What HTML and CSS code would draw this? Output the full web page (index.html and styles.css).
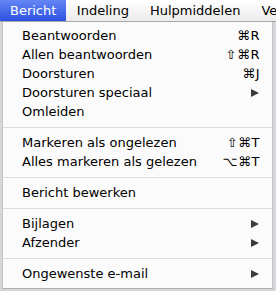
FILE: index.html
```html
<!DOCTYPE html>
<html lang="nl">
<head>
<meta charset="UTF-8">
<title>Bericht</title>
<link rel="stylesheet" href="styles.css">
</head>
<body>

<div class="menubar">
  <span class="title active">Bericht</span>
  <span class="title">Indeling</span>
  <span class="title">Hulpmiddelen</span>
  <span class="title">Venster</span>
</div>

<div class="menu">
  <div class="item"><span>Beantwoorden</span><span class="key">⌘R</span></div>
  <div class="item"><span>Allen beantwoorden</span><span class="key">⇧⌘R</span></div>
  <div class="item"><span>Doorsturen</span><span class="key">⌘J</span></div>
  <div class="item"><span>Doorsturen speciaal</span><span class="arrow"></span></div>
  <div class="item"><span>Omleiden</span></div>
  <div class="sep"></div>
  <div class="item"><span>Markeren als ongelezen</span><span class="key">⇧⌘T</span></div>
  <div class="item"><span>Alles markeren als gelezen</span><span class="key">⌥⌘T</span></div>
  <div class="sep"></div>
  <div class="item"><span>Bericht bewerken</span></div>
  <div class="sep"></div>
  <div class="item"><span>Bijlagen</span><span class="arrow"></span></div>
  <div class="item"><span>Afzender</span><span class="arrow"></span></div>
  <div class="sep"></div>
  <div class="item"><span>Ongewenste e-mail</span><span class="arrow"></span></div>
</div>

</body>
</html>
```

FILE: styles.css
```css
body {
  margin: 0;
  width: 276px;
  height: 291px;
  overflow: hidden;
  background: #d4d7dc;
  font-family: "DejaVu Sans", "Liberation Sans", sans-serif;
  font-size: 13px;
  color: #000;
}
.menubar {
  height: 21px;
  display: flex;
  white-space: nowrap;
  overflow: hidden;
  background: linear-gradient(#ffffff, #ebebeb);
  border-bottom: 1px solid #a8a8a8;
}
.title {
  padding: 0 10.5px;
  line-height: 21px;
}
.title.active {
  padding: 0 10px;
  color: #fff;
  background: linear-gradient(#6486f4, #2c51e1);
}
.menu {
  margin: 0 3px 0 2px;
  padding: 4px 0 5px;
  background: #fbfbfb;
  border-left: 1px solid #c4c4c4;
  border-right: 1px solid #c4c4c4;
  border-bottom: 1px solid #b0b0b0;
}
.item {
  display: flex;
  justify-content: space-between;
  align-items: center;
  height: 19px;
  padding: 0 12px 0 19px;
}
.key {
  letter-spacing: 0.5px;
}
.arrow {
  width: 0;
  height: 0;
  margin-right: 1px;
  border-top: 4.5px solid transparent;
  border-bottom: 4.5px solid transparent;
  border-left: 8px solid #3a3a3a;
}
.sep {
  height: 1px;
  margin: 6px 0 5px;
  background: #dedede;
}
```
